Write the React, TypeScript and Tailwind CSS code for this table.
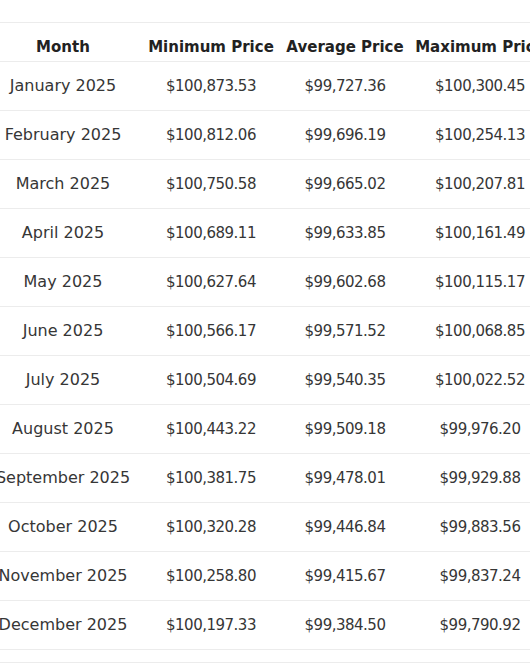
const ROWS: [string, string, string, string][] = [
  ['January 2025', '$100,873.53', '$99,727.36', '$100,300.45'],
  ['February 2025', '$100,812.06', '$99,696.19', '$100,254.13'],
  ['March 2025', '$100,750.58', '$99,665.02', '$100,207.81'],
  ['April 2025', '$100,689.11', '$99,633.85', '$100,161.49'],
  ['May 2025', '$100,627.64', '$99,602.68', '$100,115.17'],
  ['June 2025', '$100,566.17', '$99,571.52', '$100,068.85'],
  ['July 2025', '$100,504.69', '$99,540.35', '$100,022.52'],
  ['August 2025', '$100,443.22', '$99,509.18', '$99,976.20'],
  ['September 2025', '$100,381.75', '$99,478.01', '$99,929.88'],
  ['October 2025', '$100,320.28', '$99,446.84', '$99,883.56'],
  ['November 2025', '$100,258.80', '$99,415.67', '$99,837.24'],
  ['December 2025', '$100,197.33', '$99,384.50', '$99,790.92'],
];

export default function App() {
  return (
    <div className="w-[530px] h-[663px] bg-white overflow-hidden pt-[22px] font-['DejaVu_Sans',sans-serif]">
      <div className="overflow-hidden border-b border-[#ececec] h-[641px]">
        <table className="table-fixed border-collapse -ml-[14px] w-[566px] text-[#363636]">
          <colgroup>
            <col className="w-[154px]" />
            <col className="w-[142px]" />
            <col className="w-[126px]" />
            <col className="w-[144px]" />
          </colgroup>
          <thead>
            <tr className="h-[39px] border-y border-[#ececec]">
              {['Month', 'Minimum Price', 'Average Price', 'Maximum Price'].map(h => (
                <th key={h} className="text-center align-bottom pb-[3px] text-[15px] font-bold text-[#222] whitespace-nowrap px-0">{h}</th>
              ))}
            </tr>
          </thead>
          <tbody>
            {ROWS.map(r => (
              <tr key={r[0]} className="h-[49px] border-b border-[#ececec]">
                <td className="text-center text-[16px] whitespace-nowrap px-0">{r[0]}</td>
                {r.slice(1).map((c, i) => (
                  <td key={i} className="text-center text-[15px] tracking-[-0.5px] whitespace-nowrap px-0">{c}</td>
                ))}
              </tr>
            ))}
          </tbody>
        </table>
      </div>
    </div>
  );
}
